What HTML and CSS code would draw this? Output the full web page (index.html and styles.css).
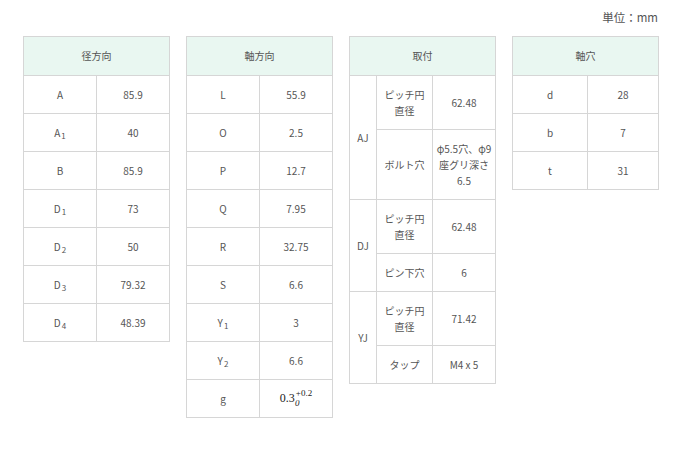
FILE: index.html
```html
<!DOCTYPE html>
<html lang="ja">
<head>
<meta charset="utf-8">
<link rel="stylesheet" href="styles.css">
</head>
<body>
<div class="page">
  <div class="unit">単位：mm</div>
  <div class="tables">
    <table class="spec">
      <colgroup><col class="c-half"><col></colgroup>
      <tr><th colspan="2">径方向</th></tr>
      <tr><td>A</td><td>85.9</td></tr>
      <tr><td>A<sub>1</sub></td><td>40</td></tr>
      <tr><td>B</td><td>85.9</td></tr>
      <tr><td>D<sub>1</sub></td><td>73</td></tr>
      <tr><td>D<sub>2</sub></td><td>50</td></tr>
      <tr><td>D<sub>3</sub></td><td>79.32</td></tr>
      <tr><td>D<sub>4</sub></td><td>48.39</td></tr>
    </table>
    <table class="spec">
      <colgroup><col class="c-half"><col></colgroup>
      <tr><th colspan="2">軸方向</th></tr>
      <tr><td>L</td><td>55.9</td></tr>
      <tr><td>O</td><td>2.5</td></tr>
      <tr><td>P</td><td>12.7</td></tr>
      <tr><td>Q</td><td>7.95</td></tr>
      <tr><td>R</td><td>32.75</td></tr>
      <tr><td>S</td><td>6.6</td></tr>
      <tr><td>Y<sub>1</sub></td><td>3</td></tr>
      <tr><td>Y<sub>2</sub></td><td>6.6</td></tr>
      <tr><td>g</td><td class="math"><span class="m-base">0.3</span><span class="m-sub">0</span><span class="m-sup">+0.2</span></td></tr>
    </table>
    <table class="spec">
      <colgroup><col class="c-type"><col class="c-label"><col></colgroup>
      <tr><th colspan="3">取付</th></tr>
      <tr><td rowspan="2">AJ</td><td>ピッチ円<br>直径</td><td>62.48</td></tr>
      <tr><td>ボルト穴</td><td>φ5.5穴、φ9<br>座グリ深さ<br>6.5</td></tr>
      <tr><td rowspan="2">DJ</td><td>ピッチ円<br>直径</td><td>62.48</td></tr>
      <tr><td>ピン下穴</td><td>6</td></tr>
      <tr><td rowspan="2">YJ</td><td>ピッチ円<br>直径</td><td>71.42</td></tr>
      <tr><td>タップ</td><td>M4 x 5</td></tr>
    </table>
    <table class="spec">
      <colgroup><col class="c-half2"><col></colgroup>
      <tr><th colspan="2">軸穴</th></tr>
      <tr><td>d</td><td>28</td></tr>
      <tr><td>b</td><td>7</td></tr>
      <tr><td>t</td><td>31</td></tr>
    </table>
  </div>
</div>
</body>
</html>
```

FILE: styles.css
```css
html, body {
  margin: 0;
  padding: 0;
  background: #ffffff;
}
body {
  font-family: "Noto Sans CJK JP", "Noto Sans", sans-serif;
  color: #555555;
}
.page {
  width: 636px;
  padding: 7px 0 0 23px;
}
.unit {
  text-align: right;
  font-size: 11.5px;
  line-height: 20px;
  height: 20px;
  margin-bottom: 9px;
  padding-right: 1px;
  color: #555555;
}
.tables {
  display: flex;
  gap: 16px;
  align-items: flex-start;
}
.spec {
  width: 147px;
  border-collapse: collapse;
  table-layout: fixed;
  font-size: 10px;
  line-height: 16px;
}
.spec th,
.spec td {
  border: 1px solid #d6d6d6;
  text-align: center;
  vertical-align: middle;
  padding: 11px 2px 10px;
  font-weight: normal;
}
.spec th {
  background: #e9f7f1;
  padding: 11px 2px 11px;
}
.c-half { width: 73px; }
.c-half2 { width: 75px; }
.c-type { width: 27px; }
.c-label { width: 56px; }
sub {
  font-size: 8px;
  line-height: 0;
  vertical-align: -2px;
  margin-left: 1px;
}
.math {
  font-family: "Liberation Serif", serif;
  font-weight: bold;
  color: #222222;
  padding-left: 4px;
}
.m-base {
  font-size: 12px;
  line-height: 0;
}
.m-sub {
  display: inline-block;
  font-size: 9px;
  line-height: 0;
  font-style: italic;
  vertical-align: -4px;
  width: 5px;
}
.m-sup {
  display: inline-block;
  font-size: 9px;
  line-height: 0;
  vertical-align: 6px;
  margin-left: -4px;
}
```
